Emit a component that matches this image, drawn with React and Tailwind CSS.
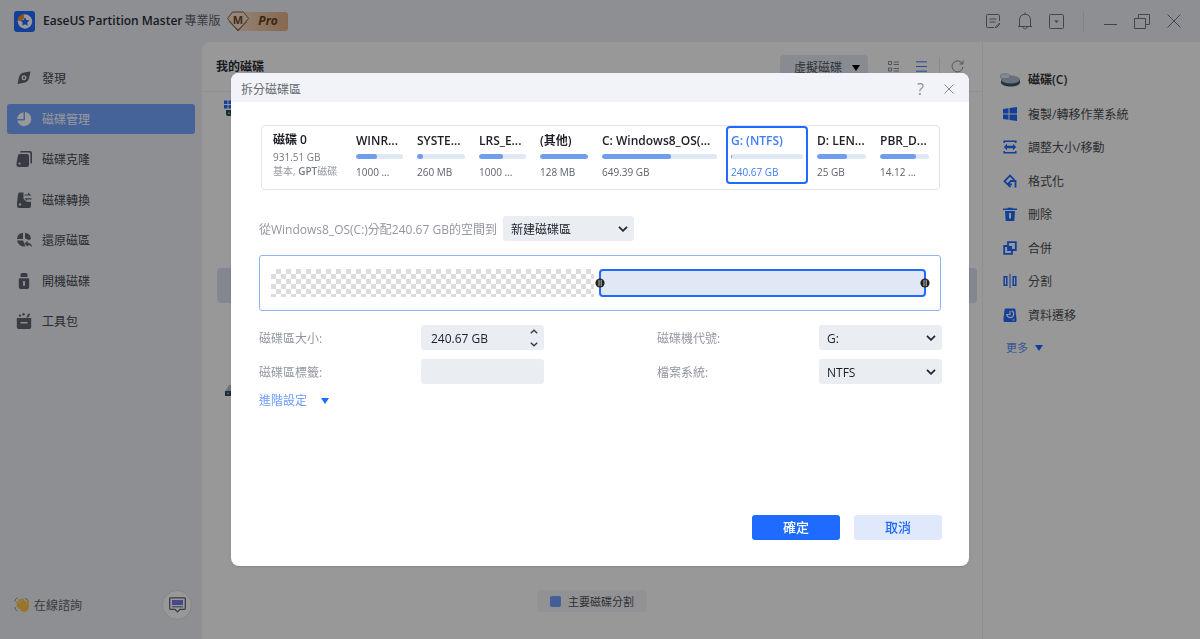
import { useState } from "react";

// ─── Data ─────────────────────────────────────────────────────────────────────

const partitions = [
  { name: "WINR...", size: "1000 ...", used: 44 },
  { name: "SYSTE...", size: "260 MB", used: 13 },
  { name: "LRS_E...", size: "1000 ...", used: 50 },
  { name: "(其他)", size: "128 MB", used: 100 },
  { name: "C: Windows8_OS(...", size: "649.39 GB", used: 60 },
  { name: "G: (NTFS)", size: "240.67 GB", used: 2, selected: true },
  { name: "D: LEN...", size: "25 GB", used: 62 },
  { name: "PBR_D...", size: "14.12 ...", used: 74 },
];

// ─── Sidebar icons ────────────────────────────────────────────────────────────

const SideIcon = ({ children }) => (
  <svg viewBox="0 0 16 16" className="size-4 shrink-0" fill="currentColor">
    {children}
  </svg>
);

const navItems = [
  {
    label: "發現",
    icon: (
      <SideIcon>
        <path fillRule="evenodd" d="M14.500 1.500 8 2.500C4.500 3.300 3.300 5 2.800 8L1.500 14l6.300-1.200C11.500 12 12.600 10 13.200 7.200ZM8 5.300a2.500 2.500 0 1 1 0 5 2.500 2.500 0 0 1 0-5Z" />
        <circle cx="8" cy="7.800" r="1.100" />
      </SideIcon>
    ),
  },
  {
    label: "磁碟管理",
    active: true,
    icon: (
      <SideIcon>
        <path d="M9 1a7.100 7.100 0 1 1-7.700 8.500H8a1 1 0 0 0 1-1Z" />
        <path d="M7.500 1.200V8H1.100A7.100 7.100 0 0 1 7.500 1.200Z" />
      </SideIcon>
    ),
  },
  {
    label: "磁碟克隆",
    icon: (
      <SideIcon>
        <path d="M4.500 0H14a2 2 0 0 1 2 2v10.500h-1.600V3a1.400 1.400 0 0 0-1.400-1.400H4.200Z" />
        <path fillRule="evenodd" d="M4.500 3H11a2 2 0 0 1 2 2v9a2 2 0 0 1-2 2H2.500a2 2 0 0 1-2-2v-2L2 4.500C2.300 3.400 3.200 3 4.500 3ZM3.600 11.500a1.100 1.100 0 1 0 0 2.200 1.100 1.100 0 0 0 0-2.200Z" />
      </SideIcon>
    ),
  },
  {
    label: "磁碟轉換",
    icon: (
      <SideIcon>
        <path fillRule="evenodd" d="M3 .5h4.500v6.300l3 3H15V14a2 2 0 0 1-2 2H3a2 2 0 0 1-2-2V11L2 2ZM4 11.200a1.200 1.200 0 1 0 0 2.400 1.200 1.200 0 0 0 0-2.400Z" />
        <path d="M8.500 2.500H12V.5l3.500 3H8.500ZM15.500 6.200V7.400H11V9L8.500 6.200Z" />
      </SideIcon>
    ),
  },
  {
    label: "還原磁區",
    icon: (
      <SideIcon>
        <path d="M7 .8V7H1A6.800 6.800 0 0 1 7 .8ZM9 .8A6.800 6.800 0 0 1 15 7l-2 1-4-1.500ZM1 8.500h6l2.500 5.700A7 7 0 0 1 1 8.500Z" />
        <path d="m8.500 11.500 3.200-2.700V11c2.600 0 4 1.500 4.300 4-1.300-1.300-2.500-1.700-4.300-1.700v1.500Z" />
      </SideIcon>
    ),
  },
  {
    label: "開機磁碟",
    icon: (
      <SideIcon>
        <path d="M4.500 1.500A1.500 1.500 0 0 1 6 0h4a1.500 1.500 0 0 1 1.500 1.500V4h-7Z" />
        <path fillRule="evenodd" d="M4 5.200h8a1.200 1.200 0 0 1 1.200 1.200v7A2.600 2.600 0 0 1 10.600 16H5.400a2.600 2.600 0 0 1-2.600-2.600v-7A1.200 1.200 0 0 1 4 5.200ZM8 8a1 1 0 0 0-1 1v3a1 1 0 0 0 2 0V9a1 1 0 0 0-1-1Z" />
      </SideIcon>
    ),
  },
  {
    label: "工具包",
    icon: (
      <SideIcon>
        <path fillRule="evenodd" d="M.8 5h14.400v9a2 2 0 0 1-2 2H2.800a2 2 0 0 1-2-2ZM4.500 9v1.600h7V9Z" />
        <circle cx="4" cy="2.600" r="1.200" />
        <circle cx="7.500" cy="1.300" r="1.200" />
        <path d="m12.500.500 1.700.8L12.200 4.500h-2Z" />
      </SideIcon>
    ),
  },
];

// ─── Action icons ─────────────────────────────────────────────────────────────

const ActionIcon = ({ children }) => (
  <svg viewBox="0 0 14 14" className="size-3.5 shrink-0" fill="none" stroke="#1f6bff" strokeWidth="1.500">
    {children}
  </svg>
);

const actions = [
  {
    label: "複製/轉移作業系統",
    icon: (
      <ActionIcon>
        <path fill="#1f6bff" stroke="none" d="M0 2 5.500 1.200V6.500H0ZM6.500 1 14 0v6.500H6.500ZM0 7.500h5.500v5.300L0 12ZM6.500 7.500H14V14l-7.500-1Z" />
      </ActionIcon>
    ),
  },
  {
    label: "調整大小/移動",
    icon: (
      <ActionIcon>
        <path d="M1.200 3V1.200h11.600V3M1.200 11v1.800h11.600V11" />
        <path fill="#1f6bff" stroke="none" d="M.8 7 4 3.800v2h6v-2L13.200 7 10 10.200v-2H4v2Z" />
      </ActionIcon>
    ),
  },
  {
    label: "格式化",
    icon: (
      <ActionIcon>
        <path strokeWidth="1.800" d="M7.500 13 1.500 7.300 7 1.500l4.300 4.300M9 10.300H7L5.800 9.200 7.800 7h4.700v6.500" />
      </ActionIcon>
    ),
  },
  {
    label: "刪除",
    icon: (
      <ActionIcon>
        <path d="M0 2.300h14M4.500 1.500h5" />
        <path fill="#1f6bff" fillRule="evenodd" stroke="none" d="M2 4h10l-.7 10H2.700Zm4 2v5.500h2V6Z" />
      </ActionIcon>
    ),
  },
  {
    label: "合併",
    icon: (
      <ActionIcon>
        <path strokeWidth="1.800" d="M5 1.200h7.800V9H5ZM5 5H1.200v7.800H9V9" />
        <path fill="#1f6bff" stroke="none" d="M5 5h4v4H5Z" />
      </ActionIcon>
    ),
  },
  {
    label: "分割",
    icon: (
      <ActionIcon>
        <path d="M1.200 2.800h2.600v8.400H1.200ZM10.200 2.800h2.600v8.400h-2.600Z" />
        <path strokeWidth="1" d="M7 0v14" />
      </ActionIcon>
    ),
  },
  {
    label: "資料遷移",
    icon: (
      <ActionIcon>
        <path fill="#1f6bff" stroke="none" d="M3 .5h8a1.500 1.500 0 0 1 1.500 1.300L13.500 11v1.500A1.500 1.500 0 0 1 12 14H2a1.500 1.500 0 0 1-1.500-1.500V11l1-9.200A1.500 1.500 0 0 1 3 .5Z" />
        <path stroke="#fff" strokeWidth="1.200" d="M8.500 2.800a3.500 3.500 0 1 1-4.800 3.700H7V3M9.500 12h2" />
      </ActionIcon>
    ),
  },
];

// ─── Shared bits ──────────────────────────────────────────────────────────────

const Triangle = ({ className }) => (
  <svg viewBox="0 0 8 6" className={className} fill="currentColor">
    <path d="M0 0h8L4 6Z" />
  </svg>
);

const DiskThumb = () => (
  <svg viewBox="0 0 22 16" className="h-4 w-[22px]">
    <path d="M0 .5h3.500V4H0ZM4.500.500H10V4H4.500ZM0 5h3.500v3.500H0ZM4.500 5H10v3.500H4.500Z" fill="#1f6bff" />
    <path d="M2 10h18v4a2 2 0 0 1-2 2H4a2 2 0 0 1-2-2Z" fill="#33475e" />
    <path d="M4 12.500h2v1.500H4Z" fill="#3fd08a" />
  </svg>
);

const SelectBox = ({ id, label, options, className }) => (
  <div className={`relative ${className ?? ""}`}>
    <select
      id={id}
      aria-label={label}
      className="h-[25px] w-full appearance-none rounded-[3px] bg-[#eaedf2] pl-2 pr-6 pt-0.5 text-xs text-[#1c1f26] outline-none"
    >
      {options.map((o) => (
        <option key={o}>{o}</option>
      ))}
    </select>
    <svg viewBox="0 0 10 6" className="pointer-events-none absolute right-1.5 top-2.5 h-1.5 w-2.5" fill="none" stroke="#24272d" strokeWidth="1.800">
      <path d="m1 .8 4 4 4-4" />
    </svg>
  </div>
);

const Handle = ({ className }) => (
  <svg viewBox="0 0 10 10" className={`absolute top-[7px] size-2.5 ${className}`}>
    <circle cx="5" cy="5" r="4.600" fill="#222" />
    <path d="M4 1.800v6.400M6.200 1.800v6.400" stroke="#bbb" strokeWidth="1" />
  </svg>
);

// ─── Title bar ────────────────────────────────────────────────────────────────

const TitleBar = () => (
  <header className="flex h-[42px] items-center pl-3.5 pr-[19px] text-[#6f7484]">
    <svg viewBox="0 0 21 21" className="size-[21px]">
      <rect width="21" height="21" rx="3" fill="#1f6bff" />
      <circle cx="11" cy="10.500" r="7.200" fill="#fff" />
      <path d="M3.500 9.500A7 7 0 0 1 10 3.200v4L7 10Z" fill="#f58a1f" />
      <path d="m11 6.200 1.400 2.900 3.100.4-2.300 2.200.6 3.100-2.800-1.500-2.800 1.500.6-3.100-2.300-2.200 3.100-.4Z" fill="#1f6bff" />
    </svg>
    <h1 className="ml-2 flex gap-0.5 text-xs font-semibold text-[#2b2e36]">
      EaseUS Partition Master <span className="font-normal text-[#5d626d]">專業版</span>
    </h1>
    <div className="ml-1.5 flex items-center">
      <svg viewBox="0 0 22 21" className="z-10 h-[21px] w-[22px]">
        <path d="M5.500 1h11l5 6.500L11 20 .5 7.500Z" fill="#f5dfcb" stroke="#8a6247" strokeWidth="1" />
        <path d="M2 10.500 11 19 20 10.500" fill="none" stroke="#8a6247" />
        <text x="11" y="13" textAnchor="middle" fontSize="11" fontWeight="700" fill="#75482a">M</text>
      </svg>
      <span className="-ml-3 flex h-[19px] w-[51px] items-center justify-center rounded-[3px] bg-linear-to-r from-[#f3dac3] to-[#dfae84] pl-3 text-xs font-bold italic text-[#6b4022]">
        Pro
      </span>
    </div>
    <div className="ml-auto flex items-center">
      <button aria-label="備註">
        <svg viewBox="0 0 14 14" className="size-3.5" fill="none" stroke="currentColor">
          <path d="M13.500 7V1.500a1 1 0 0 0-1-1h-11a1 1 0 0 0-1 1v11a1 1 0 0 0 1 1H8M3.500 5h7M3.500 8h6M9 13.500l4.500-4.500v1.500l-3 3Z" />
        </svg>
      </button>
      <button aria-label="通知" className="ml-[17px]">
        <svg viewBox="0 0 16 18" className="h-[18px] w-4" fill="none" stroke="currentColor">
          <path d="M1 14.500h14M2.500 14.500V8C2.500 4.500 4.500 2.300 8 2.300S13.500 4.500 13.500 8v6.500M8 .5v1.800M6 15c.2 2.500 3.800 2.500 4 0" />
        </svg>
      </button>
      <button aria-label="選單" className="ml-4">
        <svg viewBox="0 0 15 15" className="size-[15px]" fill="none" stroke="currentColor">
          <rect x=".5" y=".5" width="14" height="14" rx="1" />
          <path d="M5 6.500h5L7.500 9Z" fill="currentColor" stroke="none" />
        </svg>
      </button>
      <span className="ml-[19px] h-[21px] w-px bg-[#d6d9e0]" />
      <button aria-label="最小化" className="ml-5">
        <svg viewBox="0 0 13 13" className="size-[13px]" stroke="currentColor">
          <path d="M0 9.500h13" />
        </svg>
      </button>
      <button aria-label="還原" className="ml-[17px]">
        <svg viewBox="0 0 16 15" className="h-[15px] w-4" fill="none" stroke="currentColor">
          <path d="M.5 4.500h11v10H.5ZM4.500 4.500v-4h11v10h-4" />
        </svg>
      </button>
      <button aria-label="關閉" className="ml-[17px]">
        <svg viewBox="0 0 14 14" className="size-3.5" stroke="currentColor">
          <path d="m.5.5 13 13M13.500.5l-13 13" />
        </svg>
      </button>
    </div>
  </header>
);

// ─── Sidebar ──────────────────────────────────────────────────────────────────

const Sidebar = () => (
  <aside className="flex w-[202px] shrink-0 flex-col px-[7px] pb-[19px] pt-[21px]">
    <nav className="flex h-[273px] flex-col justify-between">
      {navItems.map((item) => (
        <a
          key={item.label}
          href="#"
          className={`flex h-[30px] items-center gap-2.5 rounded-[3px] pl-[9px] text-xs ${
            item.active ? "bg-[#73a4ff] text-white" : "text-[#5f636e]"
          }`}
        >
          {item.icon}
          <span className={item.active ? "pt-0.5" : "pt-0.5 text-[#444850]"}>{item.label}</span>
        </a>
      ))}
    </nav>
    <div className="mt-auto flex items-center pl-[7px] pr-[3px] text-xs text-[#5f636e]">
      <svg viewBox="0 0 16 16" className="size-4">
        <path d="M1 4.500C1 2.500 2 1.500 3.500 1M1 10c0 2 .8 3.500 2.500 4M11 1.500c1.500.2 2.500 1 3 2.500" fill="none" stroke="#8b8e95" />
        <path d="M3.300 5.600 6 8.300M5.200 3.300l3.500 3.600M8 2.300l3 3.400M3.500 8.600l2 2M13.600 4.500l.2 4" stroke="#fdc14a" strokeWidth="2.400" strokeLinecap="round" />
        <path d="M5 7.800 10.500 4.500l2.800 3.300 1.200-.8c1 3.500.2 5.500-1.500 7s-4.500 1-6-.6L4 10.500Z" fill="#fdc14a" />
      </svg>
      <span className="ml-1 pt-0.5">在線諮詢</span>
      <button aria-label="線上客服" className="ml-auto flex size-[30px] items-center justify-center rounded-full border border-[#dcdfe5] bg-[#fdfdfd]">
        <svg viewBox="0 0 17 16" className="h-4 w-[17px]" fill="none">
          <path d="M1.500.800h14a.8.8 0 0 1 .8.8v10a.8.8 0 0 1-.8.8H11L8.500 15 6 12.400H1.500a.8.8 0 0 1-.8-.8v-10a.8.8 0 0 1 .8-.8Z" stroke="#5d6170" strokeWidth="1.200" />
          <path d="M3 3h11v5H3Z" fill="#7279ea" />
          <path d="M3 9.800h11" stroke="#5d6170" />
        </svg>
      </button>
    </div>
  </aside>
);

// ─── Disk panel ───────────────────────────────────────────────────────────────

const DiskPanel = () => (
  <main className="flex min-w-0 flex-1 flex-col rounded-tl-lg bg-[#fdfdfd]">
    <div className="flex h-[50px] items-center border-b border-[#eceef2] pl-3.5 pr-[18px]">
      <h2 className="text-xs font-bold text-[#2b2e36]">我的磁碟</h2>
      <button className="ml-auto flex h-6 w-[88px] items-center gap-2.5 rounded bg-[#e3e9f3] pl-3.5 pt-0.5 text-xs text-[#50555f]">
        虛擬磁碟
        <Triangle className="h-1.5 w-2 text-black" />
      </button>
      <button aria-label="圖示檢視" className="ml-5">
        <svg viewBox="0 0 11 11" className="size-[11px]" fill="none" stroke="#8a8e9b">
          <path d="M.5.5h3v3h-3ZM.5 7h3v3h-3ZM5.500 1H11M5.500 3.500H11M5.500 7.500H11M5.500 10H11" />
        </svg>
      </button>
      <button aria-label="清單檢視" className="ml-[17px]">
        <svg viewBox="0 0 11 11" className="size-[11px]" stroke="#3f7dff">
          <path d="M0 .8h11M0 5.500h11M0 10.200h11" />
        </svg>
      </button>
      <span className="ml-3 h-5 w-px bg-[#e3e5ea]" />
      <button aria-label="重新整理" className="ml-[11px]">
        <svg viewBox="0 0 13 13" className="size-[13px]" fill="none" stroke="#8a8e9b">
          <path d="M11.500 4A5.500 5.500 0 1 0 12 7M12 .5V4H8.500" />
        </svg>
      </button>
    </div>
    <div className="flex-1 pl-[15px] pr-[5px] pt-2">
      <div className="pl-[7px]"><DiskThumb /></div>
      <div className="mt-[152px] h-[35px] rounded bg-[#d9e1f3]" />
      <div className="mt-[79px] pl-[7px]">
        <svg viewBox="0 0 22 16" className="h-4 w-[22px]">
          <path d="M1 10 5 3h12l4 7Z" fill="#b3bfd0" />
          <path d="M1 9h20v5H1Z" fill="#33475e" />
          <path d="M3 10.800h2v1.500H3Z" fill="#3fd08a" />
        </svg>
      </div>
    </div>
    <div className="mx-auto mb-[27px] flex h-[22px] w-[110px] items-center justify-center gap-[7px] rounded bg-[#f3f4f7] text-[11px] text-[#4b4f59]">
      <span className="size-[11px] rounded-[2px] bg-[#709dff]" />
      <span className="pt-0.5">主要磁碟分割</span>
    </div>
  </main>
);

// ─── Action list ──────────────────────────────────────────────────────────────

const ActionPanel = () => (
  <aside className="w-[218px] shrink-0 border-l border-[#eceef2] bg-[#fdfdfd] pt-7 text-xs text-[#4b4d54]">
    <div className="flex h-[288px] flex-col items-start justify-between">
      <h2 className="flex h-5 items-center gap-2 pl-[17px] font-semibold text-[#34363c]">
        <svg viewBox="0 0 20 14" className="h-3.5 w-5">
          <path d="M1 6.500v3C1 12 6 13.500 10.500 13.500S20 12 20 9.500v-3Z" fill="#41546c" />
          <ellipse cx="10.500" cy="6.500" rx="9.500" ry="4" fill="#aebdcf" />
          <ellipse cx="5" cy="3.300" rx="5" ry="2.500" fill="#dfe6ef" stroke="#8f9db0" strokeWidth=".6" />
        </svg>
        磁碟(C)
      </h2>
      {actions.map((a) => (
        <button key={a.label} className="flex h-5 items-center gap-[11px] pl-5">
          {a.icon}
          <span className="pt-0.5">{a.label}</span>
        </button>
      ))}
      <button className="flex h-5 items-center gap-[7px] pl-[23px] text-[11px] text-[#5b8ff8]">
        更多
        <Triangle className="h-1.5 w-2 text-[#1f6bff]" />
      </button>
    </div>
  </aside>
);

// ─── Split dialog ─────────────────────────────────────────────────────────────

const Partition = ({ name, size, used, selected }) => (
  <button
    className={`min-w-0 rounded border-2 px-[3px] text-left whitespace-nowrap ${
      selected ? "border-[#1f6bff] text-[#3f7dfb]" : "border-transparent text-[#1c1f26]"
    }`}
  >
    <span className="block h-[26px] pt-[5px] text-xs leading-4 font-semibold">{name}</span>
    <span className="block h-[5px] overflow-hidden rounded-sm bg-[#e0e7f5]">
      <span className="block h-full rounded-sm bg-[#709dee]" style={{ width: `${used}%` }} />
    </span>
    <span className={`block h-[23px] pt-[5px] text-[10px] leading-4 ${selected ? "" : "text-[#5d626c]"}`}>{size}</span>
  </button>
);

const SplitDialog = () => {
  const [size, setSize] = useState("240.67 GB");
  const [label, setLabel] = useState("");

  const step = (delta) => setSize((prev) => `${(parseFloat(prev) + delta).toFixed(2)} GB`);

  return (
    <div
      role="dialog"
      aria-label="拆分磁碟區"
      className="flex min-h-[493px] w-full max-w-[738px] flex-col overflow-hidden rounded-lg bg-white text-xs text-[#9397a1] shadow"
    >
      <div className="flex h-[29px] shrink-0 items-center bg-[#f2f3f8] pl-2.5 pr-[15px] pt-0.5">
        <h2 className="pt-0.5 text-[#656973]">拆分磁碟區</h2>
        <button aria-label="說明" className="ml-auto text-base leading-5 text-[#8b8e9e]">?</button>
        <button aria-label="關閉" className="ml-5">
          <svg viewBox="0 0 10 10" className="size-2.5" stroke="#85889a">
            <path d="m.5.5 9 9M9.500.5l-9 9" />
          </svg>
        </button>
      </div>

      <div className="flex flex-1 flex-col pb-[26px] pl-7 pr-[27px] pt-[23px]">
        {/* ── Disk map ──────────────────────────────────────────────── */}
        <div className="mx-0.5 flex h-[65px] rounded border border-[#dfe4f0] pl-[11px] pr-[5px]">
          <div className="w-[78px] shrink-0 pt-1.5 text-[10px] leading-[14px] whitespace-nowrap">
            <p className="pb-0.5 text-xs leading-4 font-semibold text-[#1c1f26]">磁碟 0</p>
            <p className="text-[#767b86]">931.51 GB</p>
            <p>基本, <span className="font-semibold text-[#767b86]">GPT</span>磁碟</p>
          </div>
          <div className="grid h-[58px] min-w-0 flex-1 grid-cols-[57fr_58fr_57fr_58fr_125fr_82fr_59fr_59fr] gap-1">
            {partitions.map((p) => (
              <Partition key={p.name} {...p} />
            ))}
          </div>
        </div>

        <div className="mt-[26px] flex items-center gap-1.5">
          <span className="pt-0.5">從Windows8_OS(C:)分配240.67 GB的空間到</span>
          <SelectBox label="目標" options={["新建磁碟區"]} className="w-[131px]" />
        </div>

        {/* ── Split bar ─────────────────────────────────────────────── */}
        <div className="mr-px mt-3.5 flex h-14 items-center gap-[5px] rounded-[3px] border border-[#8fb3f8] pl-[11px] pr-3.5">
          <div className="h-7 flex-1 bg-[repeating-conic-gradient(#dcdcdc_0%_25%,#fff_0%_50%)] bg-[length:10px_10px]" />
          <div className="relative h-7 flex-1 rounded border-2 border-[#1f6bff] bg-[#e0e7f5]">
            <Handle className="-left-1.5" />
            <Handle className="-right-1.5" />
          </div>
        </div>

        {/* ── Fields ────────────────────────────────────────────────── */}
        <div className="mt-3.5 grid grid-cols-[162px_123px_1fr_162px_123px] items-center gap-y-[9px]">
          <label htmlFor="size" className="pt-0.5">磁碟區大小:</label>
          <div className="flex h-[25px] items-center rounded-[3px] bg-[#eaedf2] pl-2.5 pr-1.5">
            <input
              id="size"
              value={size}
              onChange={(e) => setSize(e.target.value)}
              className="w-full min-w-0 bg-transparent pt-0.5 text-[#1c1f26] outline-none"
            />
            <div className="flex flex-col gap-2">
              <button aria-label="增加" onClick={() => step(0.01)}>
                <svg viewBox="0 0 8 5" className="block h-[5px] w-2" fill="none" stroke="#3a3d44" strokeWidth="1.400">
                  <path d="m.8 4.200 3.200-3 3.200 3" />
                </svg>
              </button>
              <button aria-label="減少" onClick={() => step(-0.01)}>
                <svg viewBox="0 0 8 5" className="block h-[5px] w-2" fill="none" stroke="#3a3d44" strokeWidth="1.400">
                  <path d="m.8.800 3.200 3 3.200-3" />
                </svg>
              </button>
            </div>
          </div>
          <label htmlFor="drive" className="col-start-4 pt-0.5">磁碟機代號:</label>
          <SelectBox id="drive" options={["G:"]} />

          <label htmlFor="label" className="pt-0.5">磁碟區標籤:</label>
          <input
            id="label"
            value={label}
            onChange={(e) => setLabel(e.target.value)}
            className="h-[25px] w-full rounded-[3px] bg-[#eaedf2] px-2.5 text-[#1c1f26] outline-none"
          />
          <label htmlFor="fs" className="col-start-4 pt-0.5">檔案系統:</label>
          <SelectBox id="fs" options={["NTFS"]} />
        </div>

        <button className="mt-[9px] flex items-center gap-3.5 self-start text-[#6b9cfb]">
          進階設定
          <Triangle className="h-1.5 w-2 text-[#1f6bff]" />
        </button>

        <div className="mt-auto flex justify-end gap-3.5">
          <button className="h-[25px] w-[88px] rounded-[3px] bg-[#1f6bff] text-[13px] font-medium text-white">確定</button>
          <button className="h-[25px] w-[88px] rounded-[3px] bg-[#e0e8fb] text-[13px] font-medium text-[#1f6bff]">取消</button>
        </div>
      </div>
    </div>
  );
};

// ─── App ──────────────────────────────────────────────────────────────────────

const App = () => (
  <div className="flex min-h-screen flex-col bg-[#eceff3] font-['Open_Sans','Noto_Sans_CJK_TC',sans-serif]">
    <TitleBar />
    <div className="flex flex-1">
      <Sidebar />
      <DiskPanel />
      <ActionPanel />
    </div>
    <div className="fixed inset-0 z-20 flex items-center justify-center bg-black/40">
      <SplitDialog />
    </div>
  </div>
);

export default App;
